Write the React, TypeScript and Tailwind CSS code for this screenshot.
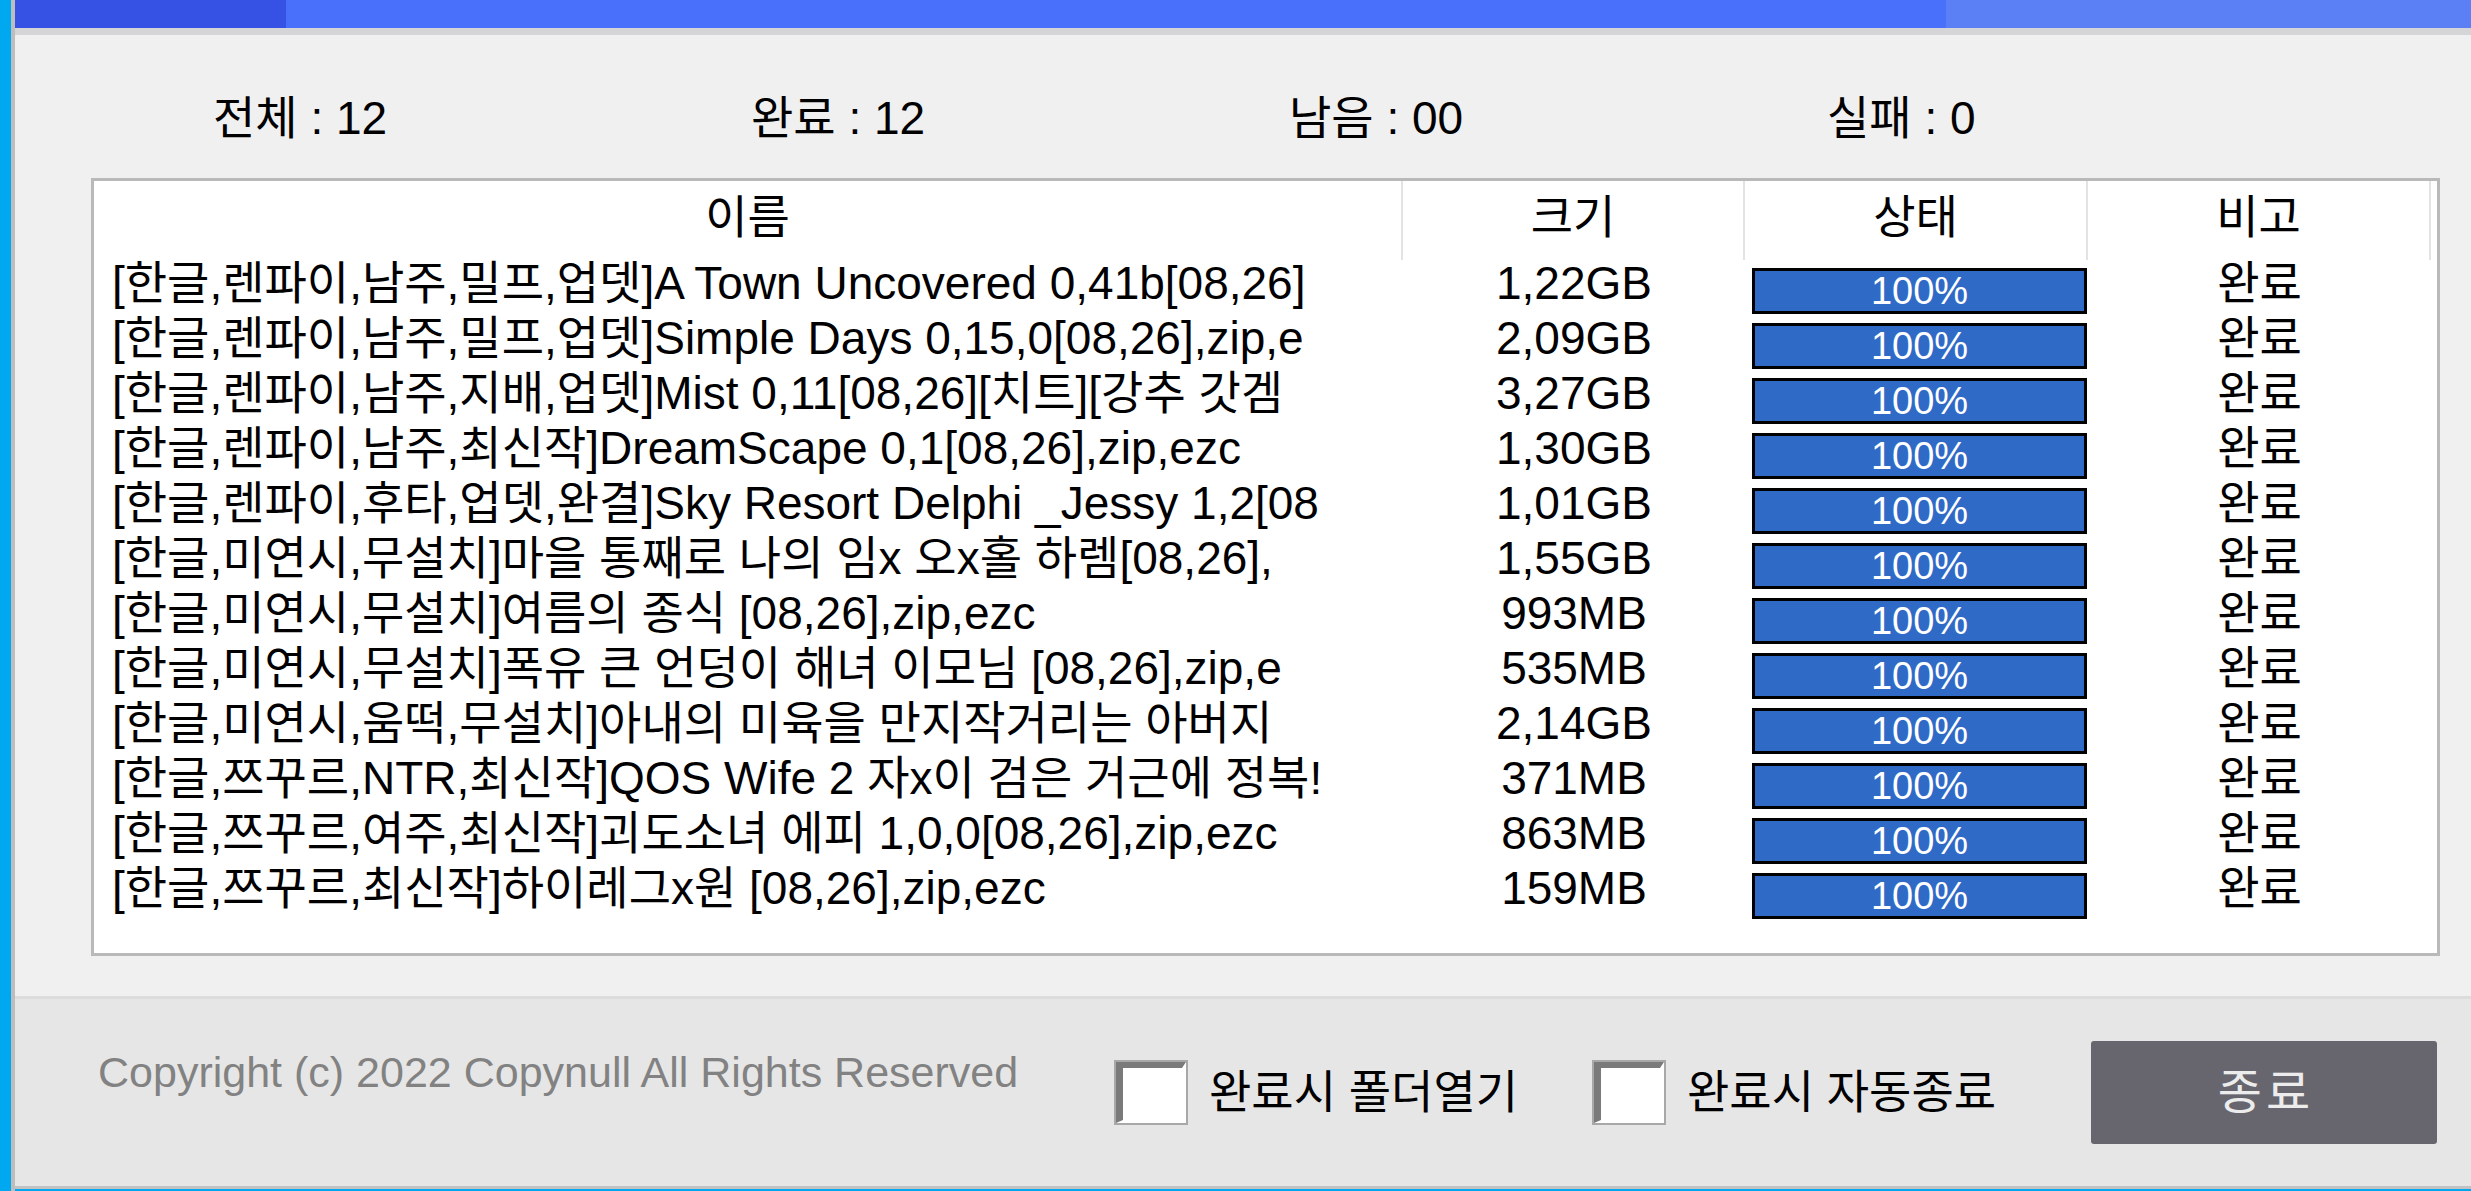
import React from 'react';

const stats = ['전체 : 12', '완료 : 12', '남음 : 00', '실패 : 0'];

// names are cut where the list column ends, as in the dialog
const files = [
  { name: '[한글,렌파이,남주,밀프,업뎃]A Town Uncovered 0,41b[08,26]', size: '1,22GB' },
  { name: '[한글,렌파이,남주,밀프,업뎃]Simple Days 0,15,0[08,26],zip,e', size: '2,09GB' },
  { name: '[한글,렌파이,남주,지배,업뎃]Mist 0,11[08,26][치트][강추 갓겜', size: '3,27GB' },
  { name: '[한글,렌파이,남주,최신작]DreamScape 0,1[08,26],zip,ezc', size: '1,30GB' },
  { name: '[한글,렌파이,후타,업뎃,완결]Sky Resort Delphi _Jessy 1,2[08', size: '1,01GB' },
  { name: '[한글,미연시,무설치]마을 통째로 나의 임x 오x홀 하렘[08,26],', size: '1,55GB' },
  { name: '[한글,미연시,무설치]여름의 종식 [08,26],zip,ezc', size: '993MB' },
  { name: '[한글,미연시,무설치]폭유 큰 언덩이 해녀 이모님 [08,26],zip,e', size: '535MB' },
  { name: '[한글,미연시,움떡,무설치]아내의 미육을 만지작거리는 아버지', size: '2,14GB' },
  { name: '[한글,쯔꾸르,NTR,최신작]QOS Wife 2 자x이 검은 거근에 정복!', size: '371MB' },
  { name: '[한글,쯔꾸르,여주,최신작]괴도소녀 에피 1,0,0[08,26],zip,ezc', size: '863MB' },
  { name: '[한글,쯔꾸르,최신작]하이레그x원 [08,26],zip,ezc', size: '159MB' },
];

export default function App() {
  return (
    <div className="flex h-[1191px] w-[2471px] overflow-hidden bg-[#f0f0f0] font-['Liberation_Sans','Noto_Sans_CJK_KR',sans-serif] text-[46px] text-black">
      {/* window edge */}
      <div className="w-[11px] shrink-0 bg-[#00a8f0]" />
      <div className="w-[4px] shrink-0 bg-[#bdbdbd]" />

      <div className="flex min-w-0 flex-1 flex-col">
        {/* overall progress strip */}
        <div className="flex h-[28px] shrink-0">
          <div className="w-[271px] bg-[#3552e5]" />
          <div className="flex-1 bg-[#4870fa]" />
          <div className="w-[525px] bg-[#5b7ff4]" />
        </div>
        <div className="h-[7px] shrink-0 bg-[#d5d5d8]" />

        {/* counters */}
        <div className="flex h-[143px] shrink-0 pl-[198px] pt-[56px]">
          {stats.map((s) => (
            <div key={s} className="w-[538px] whitespace-nowrap leading-[55px]">
              {s}
            </div>
          ))}
        </div>

        {/* file list */}
        <div className="ml-[76px] h-[778px] w-[2349px] shrink-0 overflow-hidden border-[3px] border-[#b9b9b9] bg-white">
          <div className="flex h-[79px]">
            <HeaderCell width="w-[1309px]">이름</HeaderCell>
            <HeaderCell width="w-[342px]">크기</HeaderCell>
            <HeaderCell width="w-[343px]">상태</HeaderCell>
            <HeaderCell width="w-[343px]">비고</HeaderCell>
          </div>

          {files.map((f) => (
            <div key={f.name} className="flex h-[55px]">
              <div className="w-[1309px] shrink-0 whitespace-nowrap pl-[18px] pt-[3px] leading-[40px]">{f.name}</div>
              <div className="w-[342px] shrink-0 pt-[3px] text-center leading-[40px]">{f.size}</div>
              <div className="flex w-[343px] shrink-0 items-end pb-[1px]">
                <div className="ml-[7px] flex h-[46px] w-[335px] items-center justify-center border-[3px] border-black bg-[#306ac7] text-[38px] leading-none text-white">
                  100%
                </div>
              </div>
              <div className="w-[343px] shrink-0 pt-[3px] text-center leading-[40px]">완료</div>
            </div>
          ))}
        </div>

        <div className="h-[40px] shrink-0" />
        <div className="h-[3px] shrink-0 bg-[#dcdcdc]" />

        {/* footer */}
        <div className="flex h-[187px] shrink-0 items-center bg-[#e6e6e6] pl-[83px]">
          <div className="w-[1018px] shrink-0 self-start whitespace-nowrap pt-[51px] text-[43px] leading-[44px] text-[#828282]">
            Copyright (c) 2022 Copynull All Rights Reserved
          </div>
          <Checkbox />
          <div className="ml-[23px] w-[385px] shrink-0 whitespace-nowrap leading-[55px]">완료시 폴더열기</div>
          <Checkbox />
          <div className="ml-[23px] w-[404px] shrink-0 whitespace-nowrap leading-[55px]">완료시 자동종료</div>
          <button className="flex h-[103px] w-[346px] shrink-0 items-center justify-center rounded-[3px] bg-[#67666f] pl-[4px] text-[48px] tracking-[4px] text-[#ececec]">
            종료
          </button>
        </div>

        <div className="h-[3px] shrink-0 bg-[#c2c2c2]" />
        <div className="h-[2px] shrink-0 bg-[#00a8f0]" />
      </div>
    </div>
  );
}

function HeaderCell({ width, children }: { width: string; children: React.ReactNode }) {
  return (
    <div className={`${width} flex shrink-0 items-center justify-center border-r-2 border-[#e3e3e3] pb-[6px]`}>
      {children}
    </div>
  );
}

function Checkbox() {
  return (
    <div className="h-[61px] w-[70px] shrink-0 border-b-[3px] border-l-[7px] border-r-[4px] border-t-[6px] border-b-white border-l-[#7a7a7a] border-r-white border-t-[#7a7a7a] bg-white outline outline-2 outline-[#a8a8a8]" />
  );
}
